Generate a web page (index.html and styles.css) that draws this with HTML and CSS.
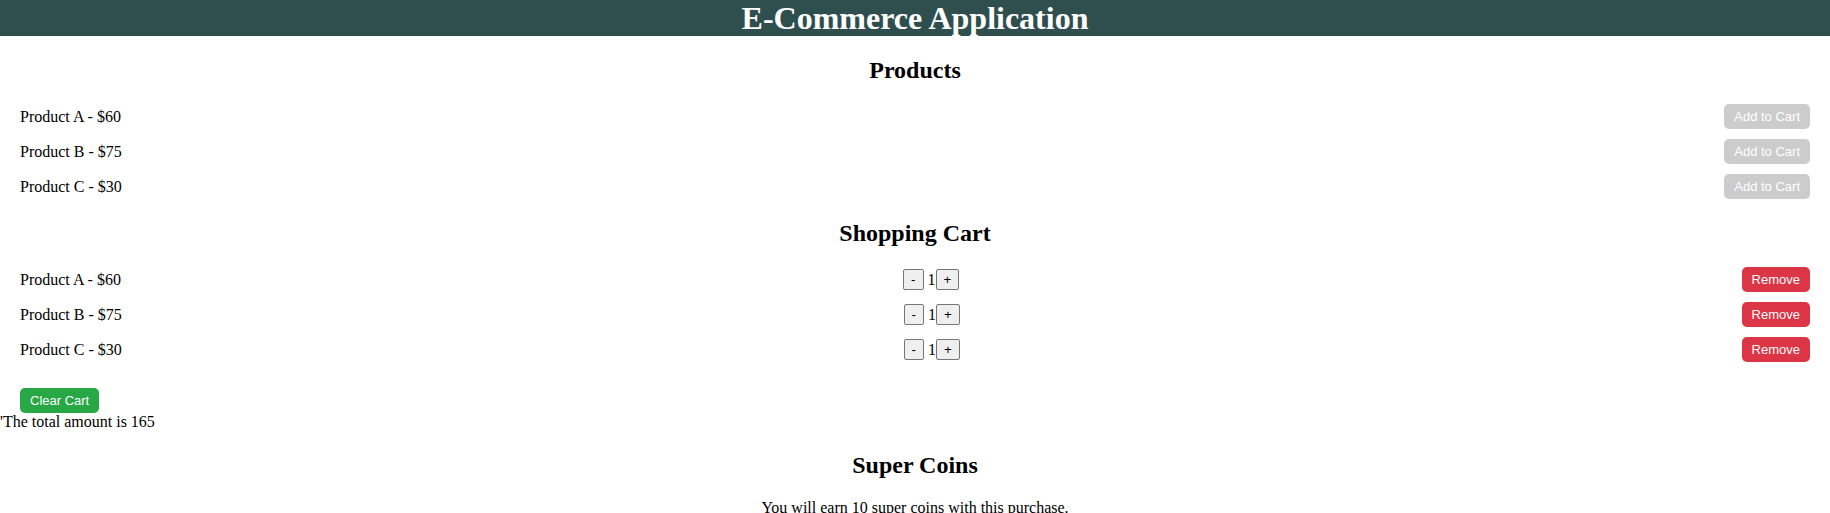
FILE: index.html
```html
<!DOCTYPE html>
<html lang="en">
<head>
<meta charset="utf-8">
<title>E-Commerce Application</title>
<link rel="stylesheet" href="styles.css">
</head>
<body>
<div class="app">
  <h1 class="app-title">E-Commerce Application</h1>

  <section class="products">
    <h2 class="section-title">Products</h2>
    <ul class="item-list">
      <li class="item-row"><span class="item-name">Product A - $60</span><button class="btn btn-add" disabled>Add to Cart</button></li>
      <li class="item-row"><span class="item-name">Product B - $75</span><button class="btn btn-add" disabled>Add to Cart</button></li>
      <li class="item-row"><span class="item-name">Product C - $30</span><button class="btn btn-add" disabled>Add to Cart</button></li>
    </ul>
  </section>

  <section class="cart">
    <h2 class="section-title">Shopping Cart</h2>
    <ul class="item-list cart-list">
      <li class="item-row"><span class="item-name">Product A - $60</span><span class="qty"><button class="qty-btn">-</button> 1<button class="qty-btn">+</button></span><button class="btn btn-remove">Remove</button></li>
      <li class="item-row"><span class="item-name">Product B - $75</span><span class="qty"><button class="qty-btn">-</button> 1<button class="qty-btn">+</button></span><button class="btn btn-remove">Remove</button></li>
      <li class="item-row"><span class="item-name">Product C - $30</span><span class="qty"><button class="qty-btn">-</button> 1<button class="qty-btn">+</button></span><button class="btn btn-remove">Remove</button></li>
    </ul>
    <div class="cart-actions"><button class="btn btn-clear">Clear Cart</button></div>
  </section>

  <div class="total">'The total amount is 165</div>

  <section class="coins">
    <h2 class="section-title">Super Coins</h2>
    <p class="coins-text">You will earn 10 super coins with this purchase.</p>
  </section>
</div>
</body>
</html>
```

FILE: styles.css
```css
html, body {
  margin: 0;
  padding: 0;
  background: #ffffff;
}

body {
  font-family: "Liberation Serif", "Times New Roman", serif;
  font-size: 16px;
  color: #000000;
}

.app-title {
  margin: 0;
  background: #2f4f4f;
  color: #ffffff;
  font-size: 32px;
  font-weight: bold;
  line-height: 36px;
  text-align: center;
}

.section-title {
  margin: 20px 0;
  font-size: 24px;
  font-weight: bold;
  line-height: 28px;
  text-align: center;
}

.item-list {
  list-style: none;
  margin: 0;
  padding: 0 20px;
  display: flex;
  flex-direction: column;
  gap: 10px;
}

.item-row {
  display: flex;
  justify-content: space-between;
  align-items: center;
  height: 25px;
}

.products .item-list {
  margin-bottom: 20px;
}

.products .section-title {
  margin-bottom: 20px;
}

.products + .cart .section-title {
  margin-top: 0;
}

.cart-list {
  margin-bottom: 26px;
}

.btn {
  font-family: "Liberation Sans", Arial, sans-serif;
  font-size: 13px;
  line-height: 15px;
  padding: 5px 10px;
  border: none;
  border-radius: 5px;
  color: #ffffff;
  cursor: pointer;
}

.btn-add {
  background: #cccccc;
  cursor: not-allowed;
}

.btn-remove {
  background: #dc3545;
}

.btn-clear {
  background: #28a745;
}

.qty {
  display: inline-flex;
  align-items: center;
  white-space: pre;
}

.qty-btn {
  font-family: "Liberation Sans", Arial, sans-serif;
  font-size: 13.33px;
  line-height: 15px;
  padding: 2px 7px;
  border: 1px solid #767676;
  border-radius: 2px;
  background: #efefef;
  color: #000000;
}

.cart-actions {
  display: flex;
  padding: 0 20px;
}

.total {
  line-height: 18px;
}

.coins .section-title {
  margin-top: 20px;
}

.coins-text {
  margin: 16px 0;
  text-align: center;
}
```
